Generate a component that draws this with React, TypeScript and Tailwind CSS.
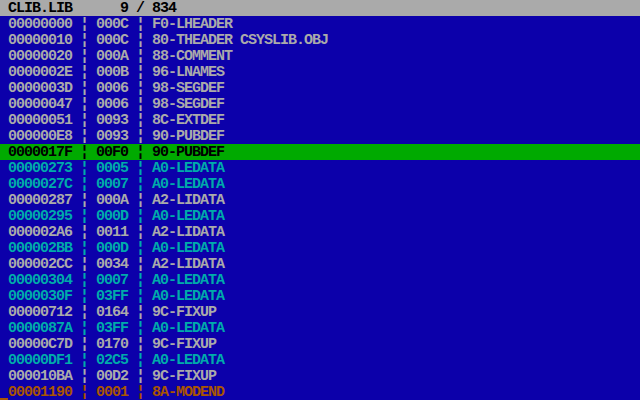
import React from "react";

type Row = { addr: string; len: string; rec: string; kind: "g" | "c" | "sel" | "o" };

const rows: Row[] = [
  { addr: "00000000", len: "000C", rec: "F0-LHEADER", kind: "g" },
  { addr: "00000010", len: "000C", rec: "80-THEADER CSYSLIB.OBJ", kind: "g" },
  { addr: "00000020", len: "000A", rec: "88-COMMENT", kind: "g" },
  { addr: "0000002E", len: "000B", rec: "96-LNAMES", kind: "g" },
  { addr: "0000003D", len: "0006", rec: "98-SEGDEF", kind: "g" },
  { addr: "00000047", len: "0006", rec: "98-SEGDEF", kind: "g" },
  { addr: "00000051", len: "0093", rec: "8C-EXTDEF", kind: "g" },
  { addr: "000000E8", len: "0093", rec: "90-PUBDEF", kind: "g" },
  { addr: "0000017F", len: "00F0", rec: "90-PUBDEF", kind: "sel" },
  { addr: "00000273", len: "0005", rec: "A0-LEDATA", kind: "c" },
  { addr: "0000027C", len: "0007", rec: "A0-LEDATA", kind: "c" },
  { addr: "00000287", len: "000A", rec: "A2-LIDATA", kind: "g" },
  { addr: "00000295", len: "000D", rec: "A0-LEDATA", kind: "c" },
  { addr: "000002A6", len: "0011", rec: "A2-LIDATA", kind: "g" },
  { addr: "000002BB", len: "000D", rec: "A0-LEDATA", kind: "c" },
  { addr: "000002CC", len: "0034", rec: "A2-LIDATA", kind: "g" },
  { addr: "00000304", len: "0007", rec: "A0-LEDATA", kind: "c" },
  { addr: "0000030F", len: "03FF", rec: "A0-LEDATA", kind: "c" },
  { addr: "00000712", len: "0164", rec: "9C-FIXUP", kind: "g" },
  { addr: "0000087A", len: "03FF", rec: "A0-LEDATA", kind: "c" },
  { addr: "00000C7D", len: "0170", rec: "9C-FIXUP", kind: "g" },
  { addr: "00000DF1", len: "02C5", rec: "A0-LEDATA", kind: "c" },
  { addr: "000010BA", len: "00D2", rec: "9C-FIXUP", kind: "g" },
  { addr: "00001190", len: "0001", rec: "8A-MODEND", kind: "o" },
];

const kindClass = {
  g: "text-[#AAAAAA]",
  c: "text-[#00AAAA]",
  sel: "bg-[#00AA00] text-black",
  o: "text-[#AA5500]",
};

export default function App() {
  return (
    <div className="w-[640px] h-[400px] bg-[#0C00AA] font-['Liberation_Mono',monospace] font-bold text-[15px] leading-4 tracking-[-1px] whitespace-pre">
      {/* title bar */}
      <div className="h-4 pt-px bg-[#AAAAAA] text-black">
        <span className="inline-block w-[8px]"> </span>
        {"CLIB.LIB      9 / 834"}
      </div>

      {rows.map((r, i) => (
        <div key={i} className={`h-4 pt-px ${kindClass[r.kind]}`}>
          {i === rows.length - 1 ? (
            <span className="inline-block w-[8px] h-[15px] align-top border-b-2 border-[#AA5500]" />
          ) : (
            <span className="inline-block w-[8px]"> </span>
          )}
          {`${r.addr} ¦ ${r.len} ¦ ${r.rec}`}
        </div>
      ))}
    </div>
  );
}
